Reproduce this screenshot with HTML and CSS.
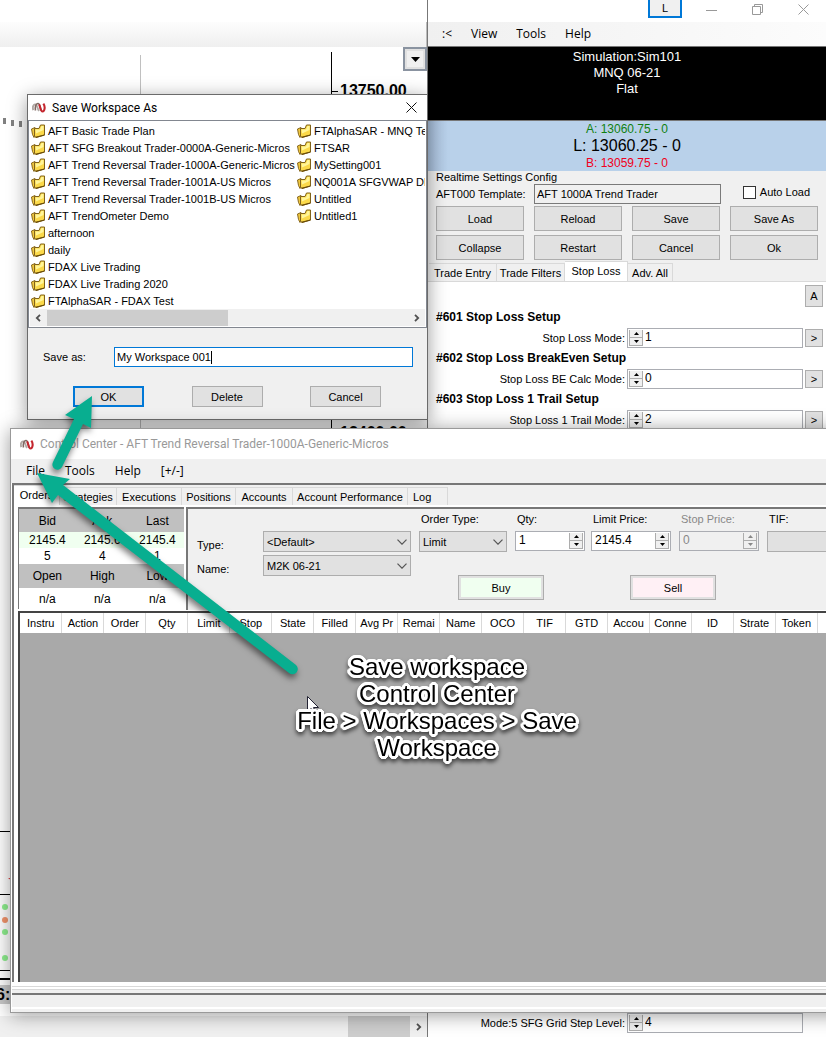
FILE: index.html
```html
<!DOCTYPE html>
<html lang="en">
<head>
<meta charset="utf-8">
<title>Save Workspace</title>
<link rel="stylesheet" href="styles.css">
</head>
<body>
<svg class="defs" aria-hidden="true">
  <defs>
    <symbol id="folder" viewBox="0 0 14 14">
      <path d="M.500 5 4 3.500V12L3 13.500 1.500 10.500z" fill="#f0c840" stroke="#7a5a10" stroke-width=".9"/>
      <path d="M3.500 4.500H8L9.500 1H13.500V11L5 13.500 3.500 12z" fill="#fbd94a" stroke="#80621a" stroke-width="1"/>
      <path d="M4.500 5.500H9L10.500 2H12.500V6L5 9.500z" fill="#fff59a"/>
      <path d="M4.500 13.400 13.500 11" stroke="#6b4d08" stroke-width="1.200"/>
    </symbol>
    <symbol id="logo" viewBox="0 0 16 12">
      <path d="M1.500 9C0 5 2 2 4 2.500S6 7 8 10" fill="none" stroke="#b0a8a4" stroke-width="2.200"/>
      <path d="M4 9.500C3 6 4.500 1 7 1.500S9 6 10.500 9.500" fill="none" stroke="#806862" stroke-width="1.800"/>
      <path d="M8 2.500C9.500 4 9.500 10.500 12 10.500S15.500 5 13 1.500" fill="none" stroke="#c4262e" stroke-width="2.400"/>
    </symbol>
    <symbol id="chev" viewBox="0 0 10 6"><path d="M.500.700 5 5.200 9.500.700" fill="none" stroke="#555" stroke-width="1.200"/></symbol>
    <symbol id="left" viewBox="0 0 6 8"><path d="M5 .800 1.800 4 5 7.200" fill="none" stroke="#505050" stroke-width="1.800"/></symbol>
    <symbol id="right" viewBox="0 0 6 8"><path d="M1 .800 4.200 4 1 7.200" fill="none" stroke="#505050" stroke-width="1.800"/></symbol>
    <symbol id="up" viewBox="0 0 5 3"><path d="M0 3 2.500 0 5 3z"/></symbol>
    <symbol id="down" viewBox="0 0 5 3"><path d="M0 0 2.500 3 5 0z"/></symbol>
  </defs>
</svg>

<main class="desktop">
  <section class="chart">
    <div class="chart-title"></div>
    <div class="chart-menu"></div>
    <div class="chart-area">
      <svg class="chart-lines" aria-hidden="true">
        <path d="M140.500 8V900" stroke="#c0c0c0"/>
        <path d="M331.500 5V900M332 44.500H338" stroke="#000"/>
        <path d="M3 71h3v6h-3zM11 73h3v6h-3zM19 74h3v6h-3z" fill="#808080"/>
        <path d="M0 784.500H12M0 847.500H12M0 923.500H12" stroke="#000"/>
        <path d="M0 932H12" stroke="#000" stroke-width="2"/>
        <path d="M0 938H12V957H0z" fill="#c8c8c8"/>
        <g fill="#8ff08f"><circle cx="5" cy="860" r="3"/><circle cx="5" cy="885" r="3"/><circle cx="5" cy="911" r="3"/></g>
        <circle cx="5" cy="873" r="3" fill="#f4956c"/>
        <path d="M8 831h4v3z" fill="#e04040"/>
        <path d="M10.500 858v5M10.500 870v5M10.500 883v5" stroke="#f4956c"/>
      </svg>
      <button class="chart-drop" aria-label="Chart options"><svg viewBox="0 0 9 5"><path d="M0 0H9L4.500 5z"/></svg></button>
      <span class="price price-top">13750.00</span>
      <span class="price price-low">13400.00</span>
      <span class="price price-time">6:</span>
    </div>
    <div class="chart-scroll"><span class="chart-thumb"></span><svg class="arr"><use href="#right"/></svg></div>
  </section>

  <section class="trader">
    <header class="trader-title">
      <button class="l-btn">L</button>
      <button class="win-btn" aria-label="Minimize"><svg viewBox="0 0 11 11"><path d="M0 6.500H11"/></svg></button>
      <button class="win-btn" aria-label="Restore"><svg viewBox="0 0 11 11"><path d="M.500 2.500H8.500V10.500H.500zM2.500 2.500V.500H10.500V8.500H8.500"/></svg></button>
      <button class="win-btn" aria-label="Close"><svg viewBox="0 0 11 11"><path d="M.500.500 10.500 10.500M10.500.500.500 10.500"/></svg></button>
    </header>
    <nav class="menu trader-menu"><button>:&lt;</button><button>View</button><button>Tools</button><button>Help</button></nav>
    <div class="account"><span>Simulation:Sim101</span><span>MNQ 06-21</span><span>Flat</span></div>
    <div class="quote"><span class="ask">A: 13060.75 - 0</span><span class="last">L: 13060.25 - 0</span><span class="bid">B: 13059.75 - 0</span></div>
    <fieldset class="config">
      <legend>Realtime Settings Config</legend>
      <div class="template">
        <label for="tpl">AFT000 Template:</label>
        <input id="tpl" type="text" value="AFT 1000A Trend Trader" readonly>
        <label class="auto"><input type="checkbox">Auto Load</label>
      </div>
      <div class="cmds">
        <button>Load</button><button>Reload</button><button>Save</button><button>Save As</button>
        <button>Collapse</button><button>Restart</button><button>Cancel</button><button>Ok</button>
      </div>
    </fieldset>
    <div class="tabs trader-tabs"><button>Trade Entry</button><button>Trade Filters</button><button class="on">Stop Loss</button><button>Adv. All</button></div>
    <div class="page">
      <button class="mini a-btn">A</button>
      <h2>#601 Stop Loss Setup</h2>
      <div class="setting"><label for="s1">Stop Loss Mode:</label><span class="num lead"><span class="spin"><button aria-label="Up"><svg><use href="#up"/></svg></button><button aria-label="Down"><svg><use href="#down"/></svg></button></span><input id="s1" type="text" value="1"></span><button class="mini">&gt;</button></div>
      <h2>#602 Stop Loss BreakEven Setup</h2>
      <div class="setting"><label for="s2">Stop Loss BE Calc Mode:</label><span class="num lead"><span class="spin"><button aria-label="Up"><svg><use href="#up"/></svg></button><button aria-label="Down"><svg><use href="#down"/></svg></button></span><input id="s2" type="text" value="0"></span><button class="mini">&gt;</button></div>
      <h2>#603 Stop Loss 1 Trail Setup</h2>
      <div class="setting"><label for="s3">Stop Loss 1 Trail Mode:</label><span class="num lead"><span class="spin"><button aria-label="Up"><svg><use href="#up"/></svg></button><button aria-label="Down"><svg><use href="#down"/></svg></button></span><input id="s3" type="text" value="2"></span><button class="mini">&gt;</button></div>
      <div class="setting bottom"><label for="s4">Mode:5 SFG Grid Step Level:</label><span class="num lead"><span class="spin"><button aria-label="Up"><svg><use href="#up"/></svg></button><button aria-label="Down"><svg><use href="#down"/></svg></button></span><input id="s4" type="text" value="4"></span></div>
    </div>
  </section>

  <section class="dialog" role="dialog" aria-label="Save Workspace As">
    <header class="dialog-title"><svg class="logo"><use href="#logo"/></svg><span>Save Workspace As</span><button aria-label="Close"><svg viewBox="0 0 11 11"><path d="M.500.500 10.500 10.500M10.500.500.500 10.500"/></svg></button></header>
    <div class="files">
      <ul>
        <li><svg><use href="#folder"/></svg>AFT Basic Trade Plan</li>
        <li><svg><use href="#folder"/></svg>AFT SFG Breakout Trader-0000A-Generic-Micros</li>
        <li><svg><use href="#folder"/></svg>AFT Trend Reversal Trader-1000A-Generic-Micros</li>
        <li><svg><use href="#folder"/></svg>AFT Trend Reversal Trader-1001A-US Micros</li>
        <li><svg><use href="#folder"/></svg>AFT Trend Reversal Trader-1001B-US Micros</li>
        <li><svg><use href="#folder"/></svg>AFT TrendOmeter Demo</li>
        <li><svg><use href="#folder"/></svg>afternoon</li>
        <li><svg><use href="#folder"/></svg>daily</li>
        <li><svg><use href="#folder"/></svg>FDAX Live Trading</li>
        <li><svg><use href="#folder"/></svg>FDAX Live Trading 2020</li>
        <li><svg><use href="#folder"/></svg>FTAlphaSAR - FDAX Test</li>
        <li><svg><use href="#folder"/></svg>FTAlphaSAR - MNQ Te</li>
        <li><svg><use href="#folder"/></svg>FTSAR</li>
        <li><svg><use href="#folder"/></svg>MySetting001</li>
        <li><svg><use href="#folder"/></svg>NQ001A SFGVWAP DE</li>
        <li><svg><use href="#folder"/></svg>Untitled</li>
        <li><svg><use href="#folder"/></svg>Untitled1</li>
      </ul>
      <div class="scroll"><svg class="arr"><use href="#left"/></svg><span class="track"><span class="thumb"></span></span><svg class="arr"><use href="#right"/></svg></div>
    </div>
    <div class="save-row"><label for="name">Save as:</label><span class="name-box"><input id="name" type="text" value="My Workspace 001"><span class="caret"></span></span></div>
    <div class="dialog-btns"><button class="ok">OK</button><button>Delete</button><button>Cancel</button></div>
  </section>

  <section class="control">
    <header class="control-title"><svg class="logo"><use href="#logo"/></svg><span>Control Center - AFT Trend Reversal Trader-1000A-Generic-Micros</span></header>
    <nav class="menu control-menu"><button>File</button><button>Tools</button><button>Help</button><button>[+/-]</button></nav>
    <div class="control-body">
      <div class="tabs control-tabs"><button class="on">Orders</button><button>Strategies</button><button>Executions</button><button>Positions</button><button>Accounts</button><button>Account Performance</button><button>Log</button></div>
      <div class="entry">
        <table class="quotes">
          <tr class="h"><th>Bid</th><th>Ask</th><th>Last</th></tr>
          <tr class="g"><td>2145.4</td><td>2145.6</td><td>2145.4</td></tr>
          <tr><td>5</td><td>4</td><td>1</td></tr>
          <tr class="h"><th>Open</th><th>High</th><th>Low</th></tr>
          <tr class="n"><td>n/a</td><td>n/a</td><td>n/a</td></tr>
        </table>
        <form class="order">
          <div class="instrument">
            <label for="type">Type:</label><span class="pick"><select id="type"><option>&lt;Default&gt;</option></select><svg><use href="#chev"/></svg></span>
            <label for="inst">Name:</label><span class="pick"><select id="inst"><option>M2K 06-21</option></select><svg><use href="#chev"/></svg></span>
          </div>
          <div class="ticket">
            <div class="fields">
              <div class="field otype"><label for="ot">Order Type:</label><span class="pick"><select id="ot"><option>Limit</option></select><svg><use href="#chev"/></svg></span></div>
              <div class="field qty"><label for="q">Qty:</label><span class="num"><input id="q" type="text" value="1"><span class="spin"><button type="button" aria-label="Up"><svg><use href="#up"/></svg></button><button type="button" aria-label="Down"><svg><use href="#down"/></svg></button></span></span></div>
              <div class="field"><label for="lp">Limit Price:</label><span class="num"><input id="lp" type="text" value="2145.4"><span class="spin"><button type="button" aria-label="Up"><svg><use href="#up"/></svg></button><button type="button" aria-label="Down"><svg><use href="#down"/></svg></button></span></span></div>
              <div class="field off"><label for="sp">Stop Price:</label><span class="num"><input id="sp" type="text" value="0" disabled><span class="spin"><button type="button" disabled aria-label="Up"><svg><use href="#up"/></svg></button><button type="button" disabled aria-label="Down"><svg><use href="#down"/></svg></button></span></span></div>
              <div class="field"><label for="tif">TIF:</label><span class="pick"><select id="tif"></select></span></div>
            </div>
            <div class="trade"><button type="button" class="buy">Buy</button><button type="button" class="sell">Sell</button></div>
          </div>
        </form>
      </div>
      <div class="orders">
        <table>
          <thead><tr><th>Instru</th><th>Action</th><th>Order</th><th>Qty</th><th>Limit</th><th>Stop</th><th>State</th><th>Filled</th><th>Avg Pr</th><th>Remai</th><th>Name</th><th>OCO</th><th>TIF</th><th>GTD</th><th>Accou</th><th>Conne</th><th>ID</th><th>Strate</th><th>Token</th><th></th></tr></thead>
        </table>
      </div>
    </div>
    <footer class="status"></footer>
  </section>

  <svg class="arrows" aria-hidden="true">
    <g fill="#08ae90">
      <path d="M92 396 65 415 74 419 53 462A5 5 0 0 0 62 467L83 424 91 428z"/>
      <path d="M37 473 52 503 58 495 289 673A5 5 0 0 0 296 665L63 485 70 479z"/>
    </g>
  </svg>
  <svg class="cursor" viewBox="0 0 12 19" aria-hidden="true"><path d="M.500.500V16L4 12.500 6.500 18 9 17 6.500 11.500H11.500z" fill="#fff" stroke="#223"/></svg>
  <p class="note">Save workspace<br>Control Center<br>File &gt; Workspaces &gt; Save<br>Workspace</p>
</main>
</body>
</html>
```
FILE: styles.css
```css
* { box-sizing: border-box; }
body { margin: 0; background: #fff; color: #000; font: 11px/16px "Liberation Sans", Arial, sans-serif; }
button, input, select { font: inherit; color: inherit; margin: 0; padding: 0; border-radius: 0; outline: 0; }
button { border: 1px solid #adadad; background: #e1e1e1; white-space: nowrap; }
input { border: 0; background: none; min-width: 0; }
svg { display: block; }
.defs { position: absolute; width: 0; height: 0; }

.desktop { position: relative; display: grid; grid-template-columns: 427px 1fr; height: 100vh; min-height: 800px; overflow: hidden; }

/* chart window */
.chart { display: flex; flex-direction: column; min-height: 0; }
.chart-title { height: 22px; }
.chart-menu { height: 25px; background: linear-gradient(#fdfdfd, #efefef); border-right: 1px solid #bbb; }
.chart-area { position: relative; flex: 1; min-height: 0; overflow: hidden; }
.chart-lines { position: absolute; width: 100%; height: 100%; }
.chart-drop { position: absolute; top: 0; right: 0; width: 24px; height: 24px; border: 2px solid #8a93a0; background: #f0f0f0; display: grid; place-items: center; box-shadow: inset 0 0 0 2px #e1e1e1; }
.chart-drop svg { width: 9px; height: 5px; }
.price { position: absolute; font-weight: bold; font-size: 16px; }
.price-top { left: 340px; top: 36px; }
.price-low { left: 340px; top: 378px; }
.price-time { left: -4px; top: 940px; }
.chart-scroll { display: flex; align-items: center; justify-content: flex-end; gap: 6px; height: 21px; padding-right: 5px; background: #f0f0f0; }
.chart-thumb { width: 62px; height: 100%; background: #cdcdcd; }
.arr { width: 6px; height: 8px; }

.menu { display: flex; align-items: center; font: 12px/16px "Open Sans", "Noto Sans", sans-serif; }
.menu button { border: 0; background: none; }

/* trader window */
.trader { display: flex; flex-direction: column; min-height: 0; min-width: 0; background: #f0f0f0; border-left: 1px solid #777; }
.trader-title { display: flex; justify-content: flex-end; height: 22px; background: #fff; }
.l-btn { width: 34px; height: 18px; border: 2px solid #0078d7; border-top: 0; background: #f0f0f0; margin-right: 6px; }
.win-btn { width: 46px; height: 18px; border: 0; background: none; display: grid; place-items: center; }
.win-btn svg { width: 11px; height: 11px; fill: none; stroke: #999; }
.trader-menu { height: 25px; gap: 19px; padding-left: 14px; background: linear-gradient(90deg, #f0f0f0, #fcfcfc); border-bottom: 1px solid #777; }
.account { height: 74px; padding-top: 2px; background: #000; color: #fff; border-bottom: 1px solid #777; display: flex; flex-direction: column; align-items: center; font-size: 13px; line-height: 16px; }
.quote { height: 50px; background: linear-gradient(90deg, #a8bfdb, #b9d1ea 20px); display: flex; flex-direction: column; align-items: center; justify-content: center; font-size: 12px; line-height: 16px; }
.quote .ask { color: #108010; }
.quote .last { font-size: 16px; line-height: 18px; }
.quote .bid { color: #f00020; }
.config { border: 0; margin: 0; padding: 0 8px; min-width: 0; }
.config legend { padding: 0; line-height: 13px; }
.template { display: grid; grid-template-columns: 88px 187px 1fr; gap: 10px; align-items: center; height: 20px; }
.template label { white-space: nowrap; }
.template > input { height: 20px; border: 1px solid #7a7a7a; padding: 0 2px; }
.auto { display: flex; align-items: center; gap: 4px; justify-self: end; height: 16px; align-self: start; margin-right: 8px; }
.auto input { appearance: none; width: 13px; height: 13px; border: 1px solid #333; background: #fff; }
.cmds { display: grid; grid-template-columns: repeat(4, 1fr); gap: 4px 10px; margin-top: 2px; }
.cmds button { height: 25px; }

.tabs { display: flex; align-items: flex-end; background: #f0f0f0; }
.tabs button { height: 18px; border: 1px solid #d9d9d9; border-left: 0; border-bottom: 0; background: #f0f0f0; flex: none; }
.tabs .on { height: 20px; background: #fff; padding-bottom: 2px; }
.trader-tabs { height: 21px; padding-left: 1px; }
.trader-tabs button { width: 68px; }
.trader-tabs .on { width: 63px; }
.trader-tabs button:last-child { width: 45px; }
.page { flex: 1; min-height: 0; display: flex; flex-direction: column; padding: 3px 3px 4px 8px; background: #fff; border-top: 1px solid #d9d9d9; }
.page h2 { margin: 0; font-size: 12px; line-height: 21px; }
.mini { width: 18px; height: 18px; flex: none; }
.a-btn { align-self: flex-end; height: 22px; }
.setting { display: flex; align-items: center; gap: 2px; height: 20px; flex: none; }
.setting label { flex: 1; text-align: right; }
.bottom { margin-top: auto; padding-right: 20px; }
.num { display: flex; align-items: center; height: 20px; border: 1px solid #abadb3; background: #fff; padding: 1px; }
.num input { flex: 1; width: 100%; height: 16px; padding: 0 0 2px 2px; font-size: 12px; }
.num.lead { width: 176px; }
.spin { display: flex; flex-direction: column; width: 14px; height: 16px; flex: none; }
.spin button { flex: 1; min-height: 0; background: #f0f0f0; display: grid; place-items: center; border-top: 0; }
.spin svg { width: 5px; height: 3px; }

/* save dialog */
.dialog { position: absolute; left: 27px; top: 94px; width: 401px; background: #f0f0f0; border: 1px solid #6b6b6b; box-shadow: 0 4px 18px rgba(0, 0, 0, .4); }
.dialog-title, .control-title { display: flex; align-items: center; background: #fff; font: 12px/16px Roboto, "Open Sans", sans-serif; }
.logo { width: 14px; height: 11px; }
.dialog-title { height: 25px; gap: 6px; padding: 0 10px 0 4px; }
.dialog-title button { margin-left: auto; border: 0; background: none; }
.dialog-title button svg { width: 11px; height: 11px; fill: none; stroke: #111; }
.files { border: 1px solid #828790; background: #fff; padding: 1px; }
.files ul { list-style: none; margin: 0; padding: 0 0 0 1px; display: grid; grid-auto-flow: column; grid-template-rows: repeat(11, 17px); grid-template-columns: 266px 1fr; overflow: hidden; }
.files li { display: flex; align-items: center; gap: 3px; white-space: nowrap; min-width: 0; overflow: hidden; }
.files li svg { width: 14px; height: 14px; flex: none; }
.scroll { display: flex; align-items: center; gap: 6px; height: 17px; padding: 0 5px; background: #f0f0f0; }
.track { flex: 1; height: 16px; }
.thumb { display: block; width: 50%; height: 16px; background: #cdcdcd; }
.save-row { display: grid; grid-template-columns: 71px 1fr; align-items: center; padding: 19px 14px 0 15px; }
.name-box { display: flex; align-items: center; height: 20px; border: 1px solid #0078d7; background: #fff; padding: 0 2px; }
.name-box input { field-sizing: content; }
.caret { width: 1px; height: 13px; background: #000; }
.dialog-btns { display: flex; justify-content: space-between; padding: 19px 46px 12px 45px; }
.dialog-btns button { width: 71px; height: 21px; }
.dialog-btns .ok { border: 2px solid #0078d7; }

/* control center */
.control { position: absolute; left: 10px; right: -60px; top: 428px; bottom: 24px; display: flex; flex-direction: column; background: #fff; border: 1px solid #999; box-shadow: 0 2px 18px rgba(0, 0, 0, .4); }
.control-title { height: 30px; gap: 6px; padding-left: 9px; color: #999; flex: none; }
.control-menu { height: 24px; gap: 20px; padding-left: 15px; background: #f0f0f0; flex: none; }
.control-body { flex: 1; min-height: 0; display: flex; flex-direction: column; margin-left: 1px; background: #fff; border: 2px solid #777; border-right: 0; border-bottom: 0; }
.control-tabs { height: 20px; flex: none; }
.control-tabs button { width: 57px; }
.control-tabs .on { width: 46px; }
.control-tabs button:nth-child(3) { width: 65px; }
.control-tabs button:nth-child(4) { width: 54px; }
.control-tabs button:nth-child(6) { width: 115px; }
.control-tabs button:last-child { width: 40px; text-align: left; padding-left: 5px; }
.entry { display: flex; gap: 2px; height: 106px; flex: none; padding: 2px 0 0 4px; background: #fff; }
.quotes { width: 166px; height: 102px; border-collapse: collapse; table-layout: fixed; border: solid #777; border-width: 2px 0 0 1px; background: #fff; flex: none; font-size: 12px; }
.quotes th, .quotes td { padding: 0 0 0 2px; font-weight: normal; text-align: center; line-height: 16px; height: 16px; }
.quotes .h { background: #c0c0c0; }
.quotes .h th { height: 24px; }
.quotes .n td { height: 21px; }
.quotes .g { background: #f0fff0; }
.order { flex: 1; display: flex; gap: 8px; height: 103px; border: solid #777; border-width: 2px 0 0 2px; background: #f0f0f0; }
.instrument { display: grid; grid-template-columns: 66px 148px; grid-auto-rows: 21px; row-gap: 3px; padding: 22px 0 0 9px; flex: none; }
.instrument label { padding-top: 6px; }
.pick { position: relative; display: block; height: 21px; }
.pick select { appearance: none; width: 100%; height: 21px; border: 1px solid #adadad; background: #e1e1e1; padding: 0 3px; }
.pick svg { position: absolute; right: 4px; top: 8px; width: 10px; height: 6px; pointer-events: none; }
.fields { display: flex; gap: 8px; padding-top: 1px; }
.field { width: 80px; flex: none; }
.field label { display: block; padding-left: 2px; height: 21px; line-height: 18px; }
.otype { width: 88px; }
.qty { width: 70px; margin-right: -2px; }
.off { color: #888; }
.off .num { background: #f0f0f0; }
.off svg { fill: #888; }
.trade { display: flex; gap: 86px; padding: 23px 0 0 39px; }
.trade button { width: 86px; height: 25px; box-shadow: inset 0 0 0 2px #e1e1e1; }
.trade .buy { background: #f0fff0; }
.trade .sell { background: #fff0f5; }
.orders { flex: 1; min-height: 0; margin-left: 4px; background: #a9a9a9; border: solid #444; border-width: 2px 0 0 2px; }
.orders table { border-collapse: collapse; table-layout: fixed; width: 840px; background: #fff; }
.orders th { font-weight: normal; padding: 0; height: 20px; border-right: 1px solid #d9d9d9; text-align: center; }
.status { height: 30px; flex: none; margin-left: 1px; border-top: 4px solid #fff; background: linear-gradient(#d9d9d9 1px, #fff 1px 3px, #d9d9d9 3px 4px, #f0f0f0 4px 7px, #777 7px 9px, #f0f0f0 9px 21px, #fff 21px 23px, #f0f0f0 23px); }

/* annotations lying over the windows */
.arrows { position: absolute; inset: 0; width: 100%; height: 100%; pointer-events: none; filter: drop-shadow(-1px 4px 3px rgba(0, 0, 0, .5)); }
.cursor { position: absolute; left: 307px; top: 696px; width: 12px; height: 19px; }
.note {
  position: absolute; left: 287px; top: 653px; width: 300px; margin: 0; text-align: center; font-size: 24px; line-height: 27px;
  text-shadow: 3px 0 #fff, -3px 0 #fff, 0 3px #fff, 0 -3px #fff, 2px 2px #fff, -2px 2px #fff, 2px -2px #fff, -2px -2px #fff, 3px 1px #fff, 3px -1px #fff, -3px 1px #fff, -3px -1px #fff, 1px 3px #fff, -1px 3px #fff, 1px -3px #fff, -1px -3px #fff;
  filter: drop-shadow(0 3px 2px rgba(0, 0, 0, .6));
}
```
